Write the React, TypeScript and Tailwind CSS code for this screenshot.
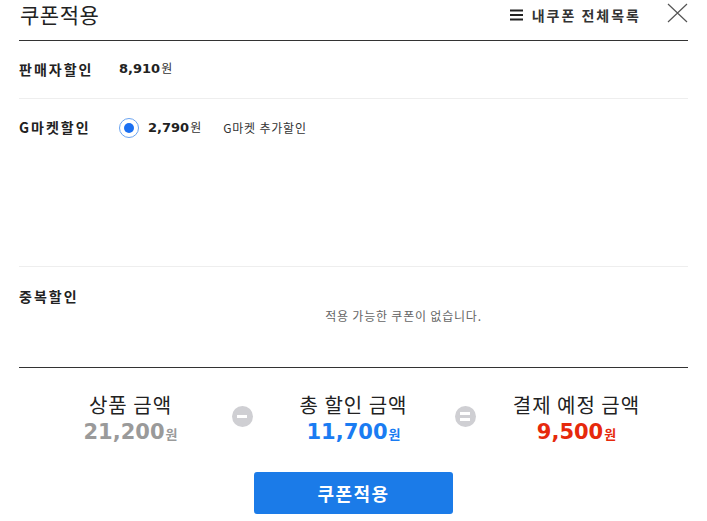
import React from "react";

const kr = "font-['Malgun_Gothic','Noto_Sans_CJK_KR',sans-serif]";
const num = "font-['DejaVu_Sans','Noto_Sans_CJK_KR',sans-serif]";

function Amount({ value }: { value: string }) {
	return (
		<span className="flex items-baseline">
			<span className={`${num} text-[13px] font-bold text-[#222]`}>{value}</span>
			<span className={`${kr} text-[12px] text-[#333] ml-[1px]`}>원</span>
		</span>
	);
}

function Operator({ kind }: { kind: "minus" | "equals" }) {
	return (
		<div className="w-0 flex justify-center pt-[15px]">
			<div className="shrink-0 w-[21px] h-[21px] rounded-full bg-[#cfcfd3] flex flex-col items-center justify-center gap-[3px]">
				<div className="w-[10px] h-[3px] bg-white" />
				{kind === "equals" && <div className="w-[10px] h-[3px] bg-white" />}
			</div>
		</div>
	);
}

function Total({ label, value, color }: { label: string; value: string; color: string }) {
	return (
		<div className="flex flex-col items-center">
			<div className={`${kr} text-[20px] leading-[28px] text-[#222] tracking-[1px]`}>{label}</div>
			<div className="flex items-baseline mt-[-1px]">
				<span className={`${num} text-[21px] leading-[28px] font-bold ${color}`}>{value}</span>
				<span className={`${kr} text-[13px] font-bold ml-[1px] ${color}`}>원</span>
			</div>
		</div>
	);
}

export default function App() {
	return (
		<div className={`w-[707px] h-[521px] bg-white pl-[19px] pr-[19px] ${kr}`}>
			{/* header */}
			<div className="flex justify-between items-start h-[41px] border-b border-[#333]">
				<h1 className="text-[21px] leading-[28px] pl-[1px] text-[#222] tracking-[0.5px]">쿠폰적용</h1>
				<div className="flex items-start">
					<div className="flex items-center mt-[5px]">
						<svg width="14" height="12" viewBox="0 0 14 12" className="mr-[8px]">
							<rect x="0" y="0.5" width="13" height="2" fill="#222" />
							<rect x="0" y="5" width="13" height="2" fill="#222" />
							<rect x="0" y="9.5" width="13" height="2" fill="#222" />
						</svg>
						<span className="text-[14px] leading-[20px] font-bold text-[#333] tracking-[2px]">
							내쿠폰 전체목록
						</span>
					</div>
					<svg width="21" height="20" viewBox="0 0 21 20" className="ml-[26px] mt-[3px]">
						<path d="M1 1 L20 19 M20 1 L1 19" stroke="#555" strokeWidth="1.2" fill="none" />
					</svg>
				</div>
			</div>

			{/* 판매자할인 */}
			<div className="flex h-[58px] border-b border-[#eee] pt-[18px]">
				<div className="w-[100px] text-[14px] leading-[20px] font-bold text-[#222] tracking-[2px]">판매자할인</div>
				<div className="flex items-center h-[20px]">
					<Amount value="8,910" />
				</div>
			</div>

			{/* G마켓할인 */}
			<div className="flex h-[168px] border-b border-[#eee] pt-[18px]">
				<div className="w-[100px] text-[14px] leading-[20px] font-bold text-[#222] tracking-[2px]">G마켓할인</div>
				<div className="flex items-center h-[22px]">
					<span className="w-[20px] h-[20px] rounded-full border border-[#6aa3f0] flex items-center justify-center">
						<span className="w-[10px] h-[10px] rounded-full bg-[#1a6ff2]" />
					</span>
					<span className="ml-[9px]">
						<Amount value="2,790" />
					</span>
					<span className="ml-[22px] text-[12px] text-[#333] tracking-[0.8px]">G마켓 추가할인</span>
				</div>
			</div>

			{/* 중복할인 */}
			<div className="flex h-[101px] border-b border-[#333] pt-[19px]">
				<div className="w-[100px] shrink-0 text-[14px] leading-[20px] font-bold text-[#222] tracking-[2px]">중복할인</div>
				<div className="flex-1 flex justify-center pt-[22px]">
					<span className="text-[12px] leading-[16px] text-[#666] tracking-[0.8px]">적용 가능한 쿠폰이 없습니다.</span>
				</div>
			</div>

			{/* totals */}
			<div className="grid grid-cols-[1fr_0_1fr_0_1fr] pt-[23px]">
				<Total label="상품 금액" value="21,200" color="text-[#9a9a9a]" />
				<Operator kind="minus" />
				<Total label="총 할인 금액" value="11,700" color="text-[#1a7cf2]" />
				<Operator kind="equals" />
				<Total label="결제 예정 금액" value="9,500" color="text-[#e6290c]" />
			</div>

			<div className="flex justify-center mt-[26px]">
				<button className="w-[199px] h-[42px] rounded-[3px] bg-[#1b7be8] text-white text-[18px] font-bold tracking-[1.5px]">
					쿠폰적용
				</button>
			</div>
		</div>
	);
}
